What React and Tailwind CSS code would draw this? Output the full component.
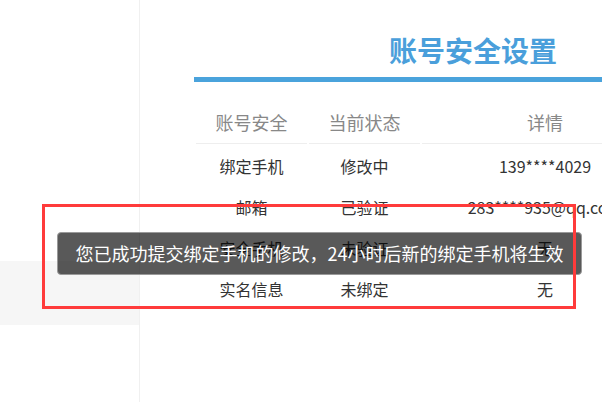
import React from 'react';

// rows of the security table
const rows = [
    { item: "绑定手机", status: "修改中", detail: "139****4029" },
    { item: "邮箱", status: "已验证", detail: "283****935@qq.com" },
    { item: "安全手机", status: "未验证", detail: "无" },
    { item: "实名信息", status: "未绑定", detail: "无" },
];

const font = { fontFamily: '"Noto Sans CJK SC", "Noto Sans", sans-serif' };

const Cell = ({ children, wide, head }) => (
    <div
        className={`flex items-center justify-center shrink-0 ${wide ? 'w-[246px]' : 'w-[111px]'} ${
            head ? 'h-[43px] border-b border-[#eeeeee] text-[18px] text-[#888888]' : 'h-[41px] text-[16px] text-[#333333]'
        } whitespace-nowrap`}
    >
        {children}
    </div>
);

const App = () => {
    return (
        <div className="relative w-[602px] h-[402px] overflow-hidden bg-white flex" style={font}>
            {/* --- left sidebar --- */}
            <div className="w-[140px] shrink-0 h-full border-r border-[#f0f0f0]">
                <div className="mt-[261px] h-[64px] bg-[#f6f6f6]" />
            </div>

            {/* --- main content --- */}
            <div className="pl-[54px] shrink-0">
                <div className="w-[558px] pt-[29px]">
                    <h1 className="text-center text-[28px] font-bold leading-[42px] text-[#4a9fdb]">账号安全设置</h1>
                </div>
                <div className="mt-[6px] h-[5px] w-[500px] bg-[#4aa3dc]" />

                <div className="mt-[19px] pl-[2px] flex flex-col gap-0">
                    <div className="flex gap-[2px]">
                        <Cell head>账号安全</Cell>
                        <Cell head>当前状态</Cell>
                        <Cell head wide>详情</Cell>
                    </div>
                    <div className="h-[1px]" />
                    {rows.map((r) => (
                        <div key={r.item} className="flex gap-[2px]">
                            <Cell>{r.item}</Cell>
                            <Cell>{r.status}</Cell>
                            <Cell wide>{r.detail}</Cell>
                        </div>
                    ))}
                </div>
            </div>

            {/* --- toast --- */}
            <div className="absolute left-[57px] top-[232px] w-[525px] h-[43px] rounded-[4px] border border-[#9a9a9a] bg-black/65 flex items-center justify-center">
                <span className="text-[18px] text-white whitespace-nowrap">您已成功提交绑定手机的修改，24小时后新的绑定手机将生效</span>
            </div>

            {/* --- red highlight box --- */}
            <div className="absolute left-[42px] top-[204px] w-[534px] h-[105px] border-[3px] border-[#ff3b3b]" />
        </div>
    );
};

export default App;
